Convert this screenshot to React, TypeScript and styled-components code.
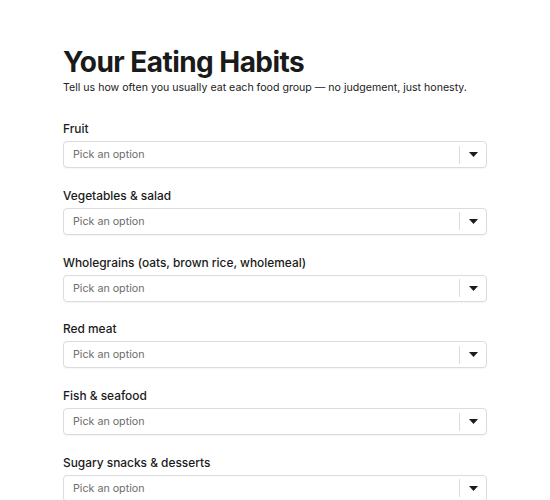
import styled, { createGlobalStyle } from 'styled-components';

const GlobalStyle = createGlobalStyle`
  body {
    margin: 0;
    background: #ffffff;
    font-family: 'Inter', 'Noto Sans', sans-serif;
    color: #1f1f1f;
  }
`;

const foodGroups = [
  'Fruit',
  'Vegetables & salad',
  'Wholegrains (oats, brown rice, wholemeal)',
  'Red meat',
  'Fish & seafood',
  'Sugary snacks & desserts',
];

const Select = ({ label }: { label: string }) => (
  <Field>
    <Label>{label}</Label>
    <SelectBox>
      <Placeholder>Pick an option</Placeholder>
      <Divider />
      <Caret>
        <svg width="9" height="5" viewBox="0 0 9 5">
          <path d="M0 0h9L4.5 5z" fill="#1a1a1a" />
        </svg>
      </Caret>
    </SelectBox>
  </Field>
);

const App = () => {
  return (
    <Page>
      <GlobalStyle />
      <Title>Your Eating Habits</Title>
      <Intro>
        Tell us how often you usually eat each food group — no judgement, just honesty.
      </Intro>
      <Form>
        {foodGroups.map(group => (
          <Select key={group} label={group} />
        ))}
      </Form>
    </Page>
  );
};

export default App;

const Page = styled.div`
  width: 424px;
  margin: 0 auto;
  padding-top: 44px;
`;

const Title = styled.h1`
  margin: 0;
  font-size: 28px;
  font-weight: 700;
  letter-spacing: -0.55px;
  line-height: 36px;
  color: #1a1a1a;
`;

const Intro = styled.p`
  margin: 0;
  font-size: 10.6px;
  line-height: 16px;
  white-space: nowrap;
  color: #222;
`;

const Form = styled.div`
  display: flex;
  flex-direction: column;
  gap: 19.8px;
  margin-top: 25px;
`;

const Field = styled.div`
  display: flex;
  flex-direction: column;
  gap: 4px;
`;

const Label = styled.div`
  font-size: 11.9px;
  font-weight: 500;
  line-height: 16px;
  color: #1a1a1a;
`;

const SelectBox = styled.div`
  display: flex;
  align-items: center;
  height: 27px;
  border: 1px solid #dcdce0;
  border-radius: 4px;
  background: #fff;
  box-sizing: border-box;
  box-shadow: 0 1px 1px rgba(0, 0, 0, 0.04);
`;

const Placeholder = styled.div`
  flex: 1;
  padding-left: 9px;
  font-size: 10.7px;
  color: #6b6b6b;
`;

const Divider = styled.div`
  width: 1px;
  height: 18px;
  background: #dcdce0;
`;

const Caret = styled.div`
  display: flex;
  align-items: center;
  justify-content: center;
  width: 26px;
  height: 100%;
`;
